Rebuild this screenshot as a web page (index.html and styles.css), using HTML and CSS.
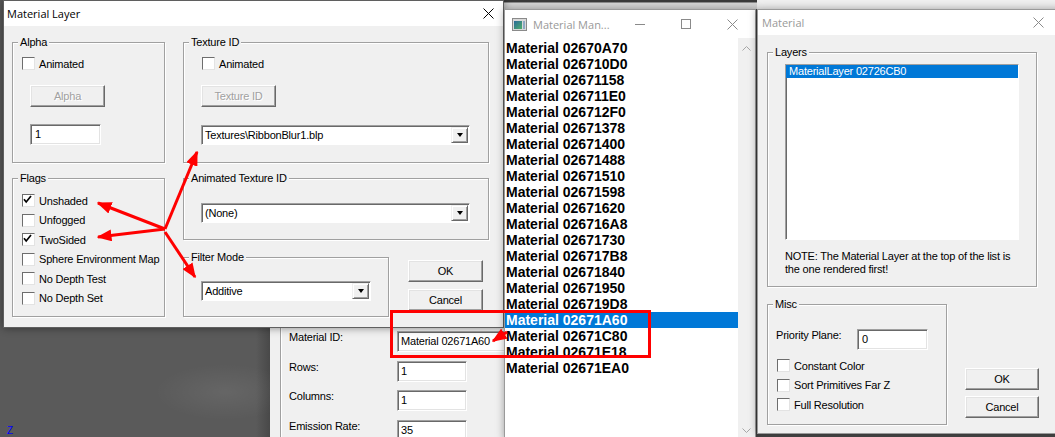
FILE: index.html
```html
<!DOCTYPE html>
<html lang="en">
<head>
    <meta charset="UTF-8">
    <title>Material Editor</title>
    <link rel="stylesheet" href="styles.css">
</head>
<body>
    <div class="back-top"></div>
    <div class="back-right"></div>
    <span class="axis">Z</span>

    <!-- emitter properties, partly hidden behind the dialogs -->
    <section class="win emitter">
        <div class="emit-inner">
            <span class="lbl">Material ID:</span><div class="field long">Material 02671A60</div>
            <span class="lbl">Rows:</span><div class="field">1</div>
            <span class="lbl">Columns:</span><div class="field">1</div>
            <span class="lbl">Emission Rate:</span><div class="field">35</div>
        </div>
    </section>

    <section class="win dlg">
        <div class="titlebar">
            <span>Material Layer</span>
            <svg class="x-ico" width="11" height="11" viewBox="0 0 11 11"><path d="M0.5 0.5l10 10M10.5 0.5l-10 10"/></svg>
        </div>
        <div class="dlg-body">
            <div class="grp g-alpha">
                <span class="legend">Alpha</span>
                <div class="chk-row"><span class="chk"></span>Animated</div>
                <div class="btn off">Alpha</div>
                <div class="field">1</div>
            </div>
            <div class="grp g-tex">
                <span class="legend">Texture ID</span>
                <div class="chk-row"><span class="chk"></span>Animated</div>
                <div class="btn off">Texture ID</div>
                <div class="combo"><span class="combo-txt">Textures\RibbonBlur1.blp</span><span class="combo-btn"><i class="tri"></i></span></div>
            </div>
            <div class="grp g-flags">
                <span class="legend">Flags</span>
                <div class="chk-list">
                    <div class="chk-row"><span class="chk"><svg width="11" height="11" viewBox="0 0 11 11"><path d="M1 4.2l2.2 2.8 4.8-6"/></svg></span>Unshaded</div>
                    <div class="chk-row"><span class="chk"></span>Unfogged</div>
                    <div class="chk-row"><span class="chk"><svg width="11" height="11" viewBox="0 0 11 11"><path d="M1 4.2l2.2 2.8 4.8-6"/></svg></span>TwoSided</div>
                    <div class="chk-row"><span class="chk"></span>Sphere Environment Map</div>
                    <div class="chk-row"><span class="chk"></span>No Depth Test</div>
                    <div class="chk-row"><span class="chk"></span>No Depth Set</div>
                </div>
            </div>
            <div class="stack">
                <div class="grp g-anim">
                    <span class="legend">Animated Texture ID</span>
                    <div class="combo"><span class="combo-txt">(None)</span><span class="combo-btn"><i class="tri"></i></span></div>
                </div>
                <div class="filter-row">
                    <div class="grp g-filter">
                        <span class="legend">Filter Mode</span>
                        <div class="combo"><span class="combo-txt">Additive</span><span class="combo-btn"><i class="tri"></i></span></div>
                    </div>
                    <div class="btn-col">
                        <div class="btn">OK</div>
                        <div class="btn">Cancel</div>
                    </div>
                </div>
            </div>
        </div>
    </section>

    <section class="win mgr">
        <div class="mgr-title">
            <svg width="15" height="13" viewBox="0 0 15 13">
                <defs>
                    <linearGradient id="ig" x1="0" y1="0" x2="1" y2="1">
                        <stop offset="0" stop-color="#2a6a9a"/>
                        <stop offset="1" stop-color="#4fae6a"/>
                    </linearGradient>
                </defs>
                <rect x="0.5" y="0.5" width="14" height="12" fill="#d9d9d9" stroke="#8a8a8a"/>
                <rect x="2" y="3" width="8" height="8" fill="url(#ig)"/>
                <rect x="11" y="3" width="2" height="8" fill="#8fa9c4"/>
            </svg>
            <span class="mgr-name">Material Man...</span>
            <span class="cap"><svg width="10" height="10" viewBox="0 0 10 10"><path d="M0 5.5h10"/></svg></span>
            <span class="cap"><svg width="10" height="10" viewBox="0 0 10 10"><rect x="0.5" y="0.5" width="9" height="9"/></svg></span>
            <span class="cap"><svg class="x-ico dim" width="11" height="11" viewBox="0 0 11 11"><path d="M0.5 0.5l10 10M10.5 0.5l-10 10"/></svg></span>
        </div>
        <div class="mgr-body">
            <div class="mgr-list">
                <div class="item">Material 02670A70</div>
                <div class="item">Material 026710D0</div>
                <div class="item">Material 02671158</div>
                <div class="item">Material 026711E0</div>
                <div class="item">Material 026712F0</div>
                <div class="item">Material 02671378</div>
                <div class="item">Material 02671400</div>
                <div class="item">Material 02671488</div>
                <div class="item">Material 02671510</div>
                <div class="item">Material 02671598</div>
                <div class="item">Material 02671620</div>
                <div class="item">Material 026716A8</div>
                <div class="item">Material 02671730</div>
                <div class="item">Material 026717B8</div>
                <div class="item">Material 02671840</div>
                <div class="item">Material 02671950</div>
                <div class="item">Material 026719D8</div>
                <div class="item sel">Material 02671A60</div>
                <div class="item">Material 02671C80</div>
                <div class="item">Material 02671E18</div>
                <div class="item">Material 02671EA0</div>
            </div>
            <div class="mgr-scroll">
                <svg width="9" height="5" viewBox="0 0 9 5"><path d="M0.5 4.5l4-4 4 4"/></svg>
                <svg width="9" height="5" viewBox="0 0 9 5"><path d="M0.5 0.5l4 4 4-4"/></svg>
            </div>
        </div>
    </section>

    <section class="win mat">
        <div class="mat-title">
            <span class="mat-name">Material</span>
            <span class="cap"><svg class="x-ico dim" width="11" height="11" viewBox="0 0 11 11"><path d="M0.5 0.5l10 10M10.5 0.5l-10 10"/></svg></span>
        </div>
        <div class="mat-body">
            <div class="grp g-layers">
                <span class="legend">Layers</span>
                <div class="layer-list">
                    <div class="layer-item">MaterialLayer 02726CB0</div>
                </div>
                <div class="note">NOTE: The Material Layer at the top of the list is<br>the one rendered first!</div>
            </div>
            <div class="mat-bottom">
                <div class="grp g-misc">
                    <span class="legend">Misc</span>
                    <div class="prio">
                        <span class="prio-lbl">Priority Plane:</span>
                        <div class="field">0</div>
                    </div>
                    <div class="chk-list misc-list">
                        <div class="chk-row"><span class="chk"></span>Constant Color</div>
                        <div class="chk-row"><span class="chk"></span>Sort Primitives Far Z</div>
                        <div class="chk-row"><span class="chk"></span>Full Resolution</div>
                    </div>
                </div>
                <div class="btn-col mat-btns">
                    <div class="btn">OK</div>
                    <div class="btn">Cancel</div>
                </div>
            </div>
        </div>
    </section>

    <svg class="marks" width="1055" height="437" viewBox="0 0 1055 437">
        <defs>
            <marker id="head" viewBox="0 0 10 8" markerWidth="5" markerHeight="4" refX="9" refY="4" orient="auto" markerUnits="strokeWidth">
                <path d="M0 0L10 4L0 8z" fill="#ff0000"/>
            </marker>
        </defs>
        <g stroke="#ff0000" stroke-width="3" fill="none">
            <line x1="165" y1="229" x2="98" y2="203" marker-end="url(#head)"/>
            <line x1="165" y1="229" x2="98" y2="237" marker-end="url(#head)"/>
            <line x1="165" y1="229" x2="197" y2="152" marker-end="url(#head)"/>
            <line x1="165" y1="232" x2="195" y2="277" marker-end="url(#head)"/>
            <rect x="391.5" y="311.5" width="258" height="45"/>
            <line x1="507" y1="332" x2="493" y2="341" marker-end="url(#head)"/>
        </g>
    </svg>
</body>
</html>
```

FILE: styles.css
```css
body {
    margin: 0;
    width: 1055px;
    height: 437px;
    overflow: hidden;
    position: relative;
    font: 11px "Liberation Sans", Arial, sans-serif;
    letter-spacing: -0.2px;
    color: #000;
    background:
        radial-gradient(ellipse 70px 28px at 225px 392px, rgba(255, 255, 255, 0.07), rgba(255, 255, 255, 0)),
        linear-gradient(to right, #5a5a5a 256px, #484848 270px);
}

/* stuff behind the windows */
.back-top {
    position: absolute;
    left: 503px;
    top: 0;
    width: 254px;
    height: 9px;
    background: linear-gradient(#3a3a3a 0 2px, #8c8c8c 2px 3px, #d6d6d6 3px);
}
.back-right {
    position: absolute;
    left: 757px;
    top: 0;
    width: 298px;
    height: 9px;
    background: #f0f0f0;
}
.axis {
    position: absolute;
    left: 7px;
    top: 426px;
    color: #0000ff;
    font-size: 10px;
    line-height: 10px;
}

.win {
    position: absolute;
    box-sizing: border-box;
}

/* common controls */
.grp {
    position: relative;
    box-sizing: border-box;
    border: 1px solid #a0a0a0;
    box-shadow: inset 1px 1px #fff, 1px 1px #fff;
}
.legend {
    position: absolute;
    top: -7px;
    left: 5px;
    padding: 0 2px;
    line-height: 13px;
    background: #f0f0f0;
    white-space: nowrap;
}
.chk-list {
    display: flex;
    flex-direction: column;
    gap: 6.5px;
}
.chk-row {
    display: flex;
    align-items: center;
    gap: 4px;
    height: 13px;
    white-space: nowrap;
}
.chk {
    box-sizing: border-box;
    flex: none;
    width: 13px;
    height: 13px;
    background: #fff;
    border: 1px solid;
    border-color: #6d6d6d #e3e3e3 #e3e3e3 #6d6d6d;
    display: flex;
}
.chk path {
    fill: none;
    stroke: #000;
    stroke-width: 1.7;
}
.field {
    box-sizing: border-box;
    height: 21px;
    background: #fff;
    border: 1px solid;
    border-color: #a0a0a0 #fff #fff #a0a0a0;
    box-shadow: inset 1px 1px #696969, inset -1px -1px #e3e3e3;
    padding-left: 4px;
    line-height: 19px;
    white-space: nowrap;
    overflow: hidden;
}
.btn {
    box-sizing: border-box;
    width: 75px;
    height: 22px;
    display: flex;
    align-items: center;
    justify-content: center;
    background: #f0f0f0;
    border: 1px solid;
    border-color: #fff #696969 #696969 #fff;
    box-shadow: inset -1px -1px #a0a0a0, inset 1px 1px #e3e3e3;
}
.btn.off {
    color: #a0a0a0;
    text-shadow: 1px 1px #fff;
}
.combo {
    box-sizing: border-box;
    display: flex;
    height: 20px;
    background: #fff;
    border: 1px solid;
    border-color: #a0a0a0 #fff #fff #a0a0a0;
    box-shadow: inset 1px 1px #696969;
}
.combo-txt {
    flex: 1;
    padding-left: 3px;
    line-height: 18px;
    white-space: nowrap;
    overflow: hidden;
}
.combo-btn {
    box-sizing: border-box;
    width: 17px;
    margin: 1px 1px 1px 0;
    background: #f0f0f0;
    border: 1px solid;
    border-color: #f0f0f0 #696969 #696969 #f0f0f0;
    box-shadow: inset 1px 1px #fff, inset -1px -1px #a0a0a0;
    display: flex;
    align-items: center;
    justify-content: center;
}
.tri {
    width: 0;
    height: 0;
    border-left: 3.5px solid transparent;
    border-right: 3.5px solid transparent;
    border-top: 4px solid #000;
}
.x-ico path {
    fill: none;
    stroke: #000;
    stroke-width: 1;
}
.x-ico.dim path {
    stroke: #8a8a8a;
}
.btn-col {
    display: flex;
    flex-direction: column;
    gap: 7px;
}

/* emitter panel */
.emitter {
    left: 270px;
    top: 327px;
    width: 240px;
    height: 110px;
    background: #f0f0f0;
    padding-left: 10px;
}
.emit-inner {
    height: 100%;
    box-sizing: border-box;
    border-left: 1px solid #a0a0a0;
    box-shadow: inset 1px 0 #fff;
    display: grid;
    grid-template-columns: 108px 1fr;
    grid-auto-rows: 21px;
    row-gap: 8.5px;
    align-content: start;
    padding: 4px 0 0 8px;
}
.emit-inner .lbl {
    line-height: 13px;
}
.emit-inner .field {
    width: 70px;
    padding-left: 3px;
}
.emit-inner .field.long {
    width: 120px;
}

/* material layer dialog */
.dlg {
    left: 3px;
    top: 0;
    width: 501px;
    height: 328px;
    border: 1px solid #5f5f5f;
    background: #f0f0f0;
    box-shadow: 0 0 8px rgba(0, 0, 0, 0.45);
}
.titlebar {
    height: 25px;
    background: #fff;
    display: flex;
    align-items: center;
    justify-content: space-between;
    padding: 0 9px 0 3px;
    font: 11px "Open Sans", sans-serif;
    letter-spacing: 0;
}
.dlg-body {
    display: grid;
    grid-template-columns: 153px 306px;
    grid-template-rows: 121px 139px;
    gap: 15px 18px;
    padding: 16px 0 0 8px;
}
.g-alpha .chk-row {
    margin: 14px 0 0 9px;
}
.g-alpha .btn,
.g-tex .btn {
    margin: 15px 0 0 17px;
}
.g-alpha .field {
    width: 71px;
    margin: 17px 0 0 17px;
}
.g-tex .chk-row {
    margin: 14px 0 0 18px;
}
.g-tex .combo {
    width: 269px;
    margin: 18px 0 0 17px;
}
.g-flags .chk-list {
    padding: 15px 0 0 9px;
}
.stack {
    display: flex;
    flex-direction: column;
    gap: 17px;
}
.g-anim {
    height: 62px;
}
.g-anim .combo {
    width: 269px;
    margin: 24px 0 0 17px;
}
.filter-row {
    display: flex;
}
.g-filter {
    width: 206px;
    height: 60px;
}
.g-filter .combo {
    width: 170px;
    margin: 23px 0 0 17px;
}
.filter-row .btn-col {
    margin: 3px 0 0 19px;
}

/* material manager */
.mgr {
    left: 504px;
    top: 9px;
    width: 252px;
    height: 431px;
    border: 1px solid #9a9a9a;
    background: #fff;
    box-shadow: 0 0 8px rgba(0, 0, 0, 0.35);
    display: flex;
    flex-direction: column;
}
.mgr-title {
    height: 28px;
    flex: none;
    display: flex;
    align-items: center;
    padding-left: 7px;
    color: #999;
    font: 11px "Open Sans", sans-serif;
    letter-spacing: 0;
}
.mgr-name {
    flex: 1;
    margin-left: 6px;
    white-space: nowrap;
}
.cap {
    width: 46px;
    height: 100%;
    display: flex;
    align-items: center;
    justify-content: center;
}
.cap path,
.cap rect {
    fill: none;
    stroke: #8a8a8a;
    stroke-width: 1;
}
.mgr-body {
    flex: 1;
    display: flex;
}
.mgr-list {
    flex: 1;
    padding-top: 2px;
}
.item {
    height: 16px;
    line-height: 16px;
    padding-left: 1px;
    font: bold 14px "Liberation Sans", Arial, sans-serif;
    letter-spacing: 0;
    white-space: nowrap;
}
.item.sel {
    background: #0078d7;
    color: #fff;
}
.mgr-scroll {
    width: 17px;
    background: #f0f0f0;
    display: flex;
    flex-direction: column;
    justify-content: space-between;
    align-items: center;
    padding: 8px 0 6px;
}
.mgr-scroll path {
    fill: none;
    stroke: #a6a6a6;
    stroke-width: 1;
}

/* material window */
.mat {
    left: 757px;
    top: 9px;
    width: 305px;
    height: 425px;
    border: 1px solid #9a9a9a;
    background: #f0f0f0;
    box-shadow: 0 0 8px rgba(0, 0, 0, 0.35);
}
.mat-title {
    height: 25px;
    background: #fff;
    display: flex;
    align-items: center;
    padding-left: 4px;
    color: #999;
    font: 11px "Open Sans", sans-serif;
    letter-spacing: 0;
}
.mat-name {
    flex: 1;
}
.mat-body {
    padding: 17px 0 0 9px;
}
.g-layers {
    width: 270px;
    height: 235px;
}
.layer-list {
    box-sizing: border-box;
    width: 234px;
    height: 176px;
    margin: 11px 0 0 17px;
    background: #fff;
    border: 1px solid;
    border-color: #a0a0a0 #fff #fff #a0a0a0;
    box-shadow: inset 1px 1px #696969;
}
.layer-item {
    height: 13px;
    line-height: 13px;
    padding-left: 3px;
    background: #0078d7;
    color: #fff;
    white-space: nowrap;
}
.note {
    margin: 10px 0 0 17px;
    line-height: 13px;
    white-space: nowrap;
}
.mat-bottom {
    display: flex;
    margin-top: 17px;
}
.g-misc {
    width: 180px;
    height: 121px;
}
.prio {
    display: flex;
    margin: 24px 0 0 8px;
}
.prio-lbl {
    width: 81px;
    line-height: 13px;
}
.prio .field {
    width: 71px;
}
.misc-list {
    margin: 9px 0 0 9px;
}
.mat-btns {
    margin: 64px 0 0 18px;
    gap: 6px;
}
.mat-btns .btn {
    width: 74px;
}

.marks {
    position: absolute;
    left: 0;
    top: 0;
    pointer-events: none;
}
```
